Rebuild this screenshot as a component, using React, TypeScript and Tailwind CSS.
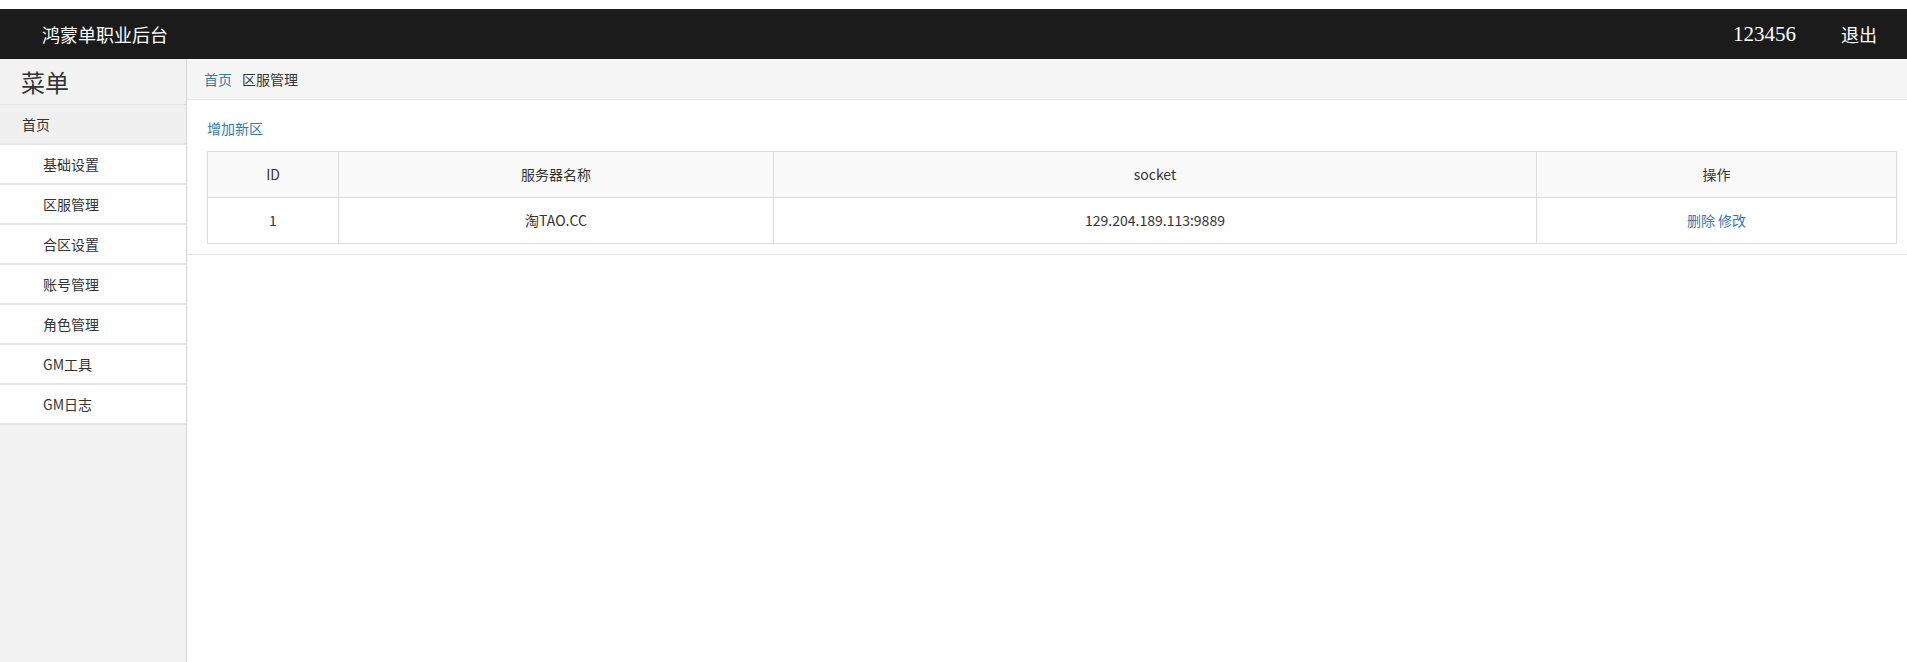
const menuItems = ["基础设置", "区服管理", "合区设置", "账号管理", "角色管理", "GM工具", "GM日志"];

export default function App() {
  return (
    <div className="min-h-screen flex flex-col bg-white text-[#333] font-['Microsoft_YaHei','Noto_Sans_CJK_SC',sans-serif]">
      <div className="h-[9px] bg-white" />
      <header className="h-[50px] bg-[#1b1b1b] text-white flex items-center pl-[42px] pr-[30px]">
        <span className="text-[18px] leading-none">鸿蒙单职业后台</span>
        <div className="ml-auto flex items-center">
          <span className="text-[21px] leading-none font-['Liberation_Serif',serif]">123456</span>
          <span className="ml-[45px] text-[18px] leading-none">退出</span>
        </div>
      </header>

      <div className="flex flex-1">
        <aside className="w-[187px] shrink-0 bg-[#f2f2f2] border-r border-[#d6d6d6]">
          <div className="h-[46px] border-b border-[#e3e3e3] pl-[21px] flex items-center text-[24px] leading-none">
            菜单
          </div>
          <div className="h-[40px] bg-[#f0f0f0] border-b-2 border-[#e4e4e4] pl-[22px] flex items-center text-[14px]">
            首页
          </div>
          {menuItems.map((item) => (
            <div
              key={item}
              className="h-[40px] bg-white border-b-2 border-[#e4e4e4] pl-[43px] flex items-center text-[14px]"
            >
              {item}
            </div>
          ))}
        </aside>

        <main className="flex-1 min-w-0">
          <div className="h-[41px] bg-[#f5f5f5] border-b border-[#e5e5e5] pl-[17px] flex items-center gap-[10px] text-[14px]">
            <a className="text-[#337ab7]">首页</a>
            <span>区服管理</span>
          </div>

          <div className="border-b border-[#e5e5e5] pl-[20px] pr-[10px] pt-[18px] pb-[10px]">
            <a className="block text-[14px] leading-[20px] text-[#337ab7] mb-[13px]">增加新区</a>
            <table className="w-full border-collapse text-[14px] text-center">
              <colgroup>
                <col className="w-[131px]" />
                <col className="w-[435px]" />
                <col className="w-[763px]" />
                <col />
              </colgroup>
              <thead>
                <tr className="bg-[#f9f9f9] h-[46px]">
                  <th className="border border-[#dddddd] font-normal">ID</th>
                  <th className="border border-[#dddddd] font-normal">服务器名称</th>
                  <th className="border border-[#dddddd] font-normal">socket</th>
                  <th className="border border-[#dddddd] font-normal">操作</th>
                </tr>
              </thead>
              <tbody>
                <tr className="h-[46px]">
                  <td className="border border-[#dddddd]">1</td>
                  <td className="border border-[#dddddd]">淘TAO.CC</td>
                  <td className="border border-[#dddddd]">129.204.189.113:9889</td>
                  <td className="border border-[#dddddd]">
                    <a className="text-[#337ab7]">删除</a> <a className="text-[#337ab7]">修改</a>
                  </td>
                </tr>
              </tbody>
            </table>
          </div>
        </main>
      </div>
    </div>
  );
}
